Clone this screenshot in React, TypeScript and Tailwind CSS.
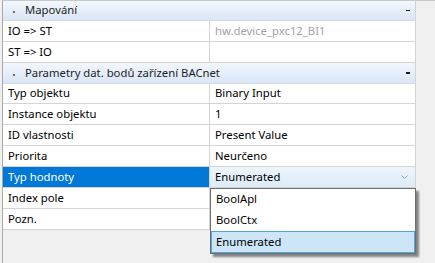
import React from "react";

const font = { fontFamily: '"Noto Sans", "Open Sans", sans-serif' };

function Header({ title, h }: { title: string; h: string }) {
  return (
    <div
      className={`flex items-center ${h} border-b border-[#d5dbe3] bg-gradient-to-b from-[#f3f7fd] to-[#d9e6f6] text-[11.3px] text-[#1e1e1e]`}
    >
      <span className="ml-[10px] mr-[10px] mt-[3px] h-[2px] w-[2px] bg-[#6d6d6d]" />
      <span className="flex-1">{title}</span>
      <span className="mr-[5px] h-[1.5px] w-[4px] bg-[#1a1a1a]" />
    </div>
  );
}

function Row({
  name,
  value,
  h = "h-[21px]",
  gray = false,
}: {
  name: string;
  value?: string;
  h?: string;
  gray?: boolean;
}) {
  return (
    <div className={`flex ${h} border-b border-[#d4d4d4] bg-white text-[11.3px]`}>
      <div className="flex w-[207px] items-center border-r border-[#d4d4d4] pl-[5px] text-black">
        {name}
      </div>
      <div className={`flex flex-1 items-center pl-[5px] ${gray ? "text-[#a3a3a3]" : "text-black"}`}>
        {value}
      </div>
    </div>
  );
}

export default function App() {
  return (
    <div className="h-[263px] w-[435px] overflow-hidden bg-[#f0f0f0]" style={font}>
      <div className="relative ml-[2px] h-full border-l border-t border-[#a9a9a9] border-t-[#c9c9c9]">
        <div className="w-[413px] border-r border-[#d4d4d4]">
          <Header title="Mapování" h="h-[20px]" />
          <Row name="IO => ST" value="hw.device_pxc12_BI1" gray />
          <Row name="ST => IO" value="" />
          <Header title="Parametry dat. bodů zařízení BACnet" h="h-[21px]" />
          <Row name="Typ objektu" value="Binary Input" h="h-[20px]" />
          <Row name="Instance objektu" value="1" />
          <Row name="ID vlastnosti" value="Present Value" />
          <Row name="Priorita" value="Neurčeno" />
          <div className="flex h-[21px] border-b border-[#d4d4d4] text-[11.3px]">
            <div className="flex w-[207px] items-center border-r border-[#d4d4d4] bg-[#0078d7] pl-[5px] text-white">
              Typ hodnoty
            </div>
            <div className="flex flex-1 items-center bg-gradient-to-b from-[#eef5fc] to-[#dcebf9] pl-[5px] pr-[6px] text-black">
              <span className="flex-1">Enumerated</span>
              <svg width="7" height="4" viewBox="0 0 7 4" className="mr-[1px]">
                <path d="M0.5 0.5 L3.5 3.5 L6.5 0.5" fill="none" stroke="#8a9aae" strokeWidth="1" />
              </svg>
            </div>
          </div>
          <Row name="Index pole" value="" />
          <Row name="Pozn." value="" />
        </div>

        <div className="absolute left-[207px] top-[187px] w-[206px] border border-[#6e6e6e] bg-white text-[11.3px] text-black shadow-[3px_3px_2px_rgba(0,0,0,0.45)]">
          <div className="flex h-[21px] items-center pl-[5px]">BoolApl</div>
          <div className="flex h-[21px] items-center pl-[5px]">BoolCtx</div>
          <div className="flex h-[22px] items-center border border-[#4ea6dc] bg-[#cce6f7] pl-[4px]">
            Enumerated
          </div>
        </div>
      </div>
    </div>
  );
}
